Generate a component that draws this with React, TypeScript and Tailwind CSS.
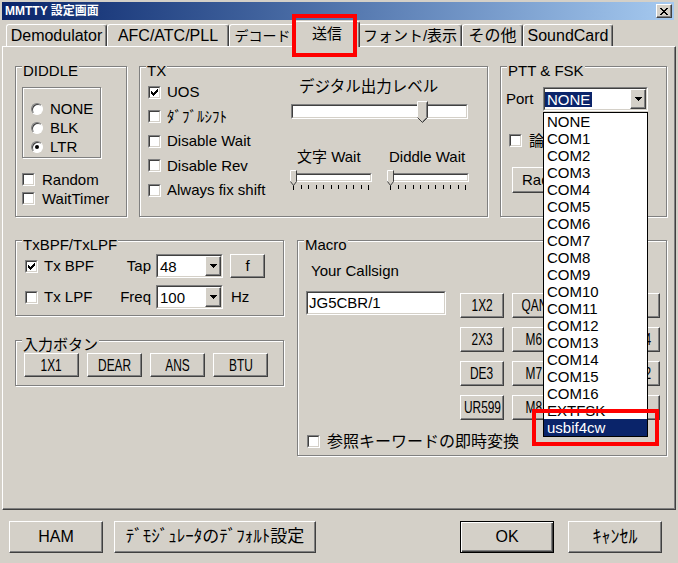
import type { ReactNode } from "react";

const raised =
  "border border-t-white border-l-white border-r-[#404040] border-b-[#404040] bg-[#d4d0c8] shadow-[inset_-1px_-1px_0_#808080]";

const CHECK_ROWS = ["......#", ".....##", "#...###", "##.###.", "#####..", ".###...", "..#...."];

const PORTS = [
  "NONE", "COM1", "COM2", "COM3", "COM4", "COM5", "COM6", "COM7", "COM8", "COM9",
  "COM10", "COM11", "COM12", "COM13", "COM14", "COM15", "COM16", "EXTFSK", "usbif4cw",
];

// third and fourth columns sit under the open list, only their edges show
const MACRO_ROWS = [
  ["1X2", "QAN", "", ""],
  ["2X3", "M6", "", "4"],
  ["DE3", "M7", "", "2"],
  ["UR599", "M8", "", ""],
];

function Sunken({ className = "", innerClassName = "", children }: { className?: string; innerClassName?: string; children?: ReactNode }) {
  return (
    <div className={`border border-t-[#808080] border-l-[#808080] border-r-white border-b-white ${className}`}>
      <div className={`h-full w-full border border-t-[#404040] border-l-[#404040] border-r-[#d4d0c8] border-b-[#d4d0c8] ${innerClassName}`}>
        {children}
      </div>
    </div>
  );
}

function Check({ checked = false }: { checked?: boolean }) {
  return (
    <Sunken className="h-[13px] w-[13px] shrink-0" innerClassName="flex items-center justify-center bg-white">
      {checked && (
        <svg width="7" height="7" viewBox="0 0 7 7" shapeRendering="crispEdges">
          {CHECK_ROWS.flatMap((row, y) =>
            row.split("").map((c, x) => (c === "#" ? <rect key={`${x}-${y}`} x={x} y={y} width="1" height="1" fill="#000" /> : null))
          )}
        </svg>
      )}
    </Sunken>
  );
}

function Radio({ checked = false }: { checked?: boolean }) {
  return (
    <span className="flex h-[12px] w-[12px] shrink-0 items-center justify-center rounded-full border border-t-[#808080] border-l-[#808080] border-r-white border-b-white bg-white shadow-[inset_1px_1px_0_#404040]">
      {checked && <span className="h-[4px] w-[4px] rounded-full bg-black" />}
    </span>
  );
}

function Arrow() {
  return (
    <svg width="7" height="4" viewBox="0 0 7 4" shapeRendering="crispEdges">
      <path d="M0 0h7v1h-1v1h-1v1h-1v1h-1v-1h-1v-1h-1v-1h-1z" fill="#000" />
    </svg>
  );
}

function Combo({ value, className = "", selected = false }: { value: string; className?: string; selected?: boolean }) {
  return (
    <Sunken className={`h-[24px] shrink-0 ${className}`} innerClassName="flex bg-white">
      <div className="flex flex-1 items-center overflow-hidden">
        <span className={selected ? "bg-[#0a246a] px-[2px] leading-[15px] text-white" : "px-[2px] leading-[15px]"}>{value}</span>
      </div>
      <div className={`${raised} flex w-[16px] items-center justify-center`}>
        <Arrow />
      </div>
    </Sunken>
  );
}

function Btn({ className = "", children }: { className?: string; children?: ReactNode }) {
  return <div className={`${raised} flex shrink-0 items-center justify-center overflow-visible whitespace-nowrap ${className}`}>{children}</div>;
}

function Narrow({ children }: { children: ReactNode }) {
  return <span className="inline-block scale-x-[0.7] whitespace-nowrap text-[17px] leading-[17px]">{children}</span>;
}

function Group({ title, className = "", children }: { title: string; className?: string; children?: ReactNode }) {
  return (
    <div className={`relative shrink-0 border border-[#808080] shadow-[1px_1px_0_#fff,inset_1px_1px_0_#fff] ${className}`}>
      <span className="absolute -top-[4px] left-[6px] whitespace-nowrap bg-[#d4d0c8] px-[1px] leading-[15px]">{title}</span>
      {children}
    </div>
  );
}

function BigThumb() {
  return (
    <svg width="11" height="22" viewBox="0 0 11 22" className="absolute -top-[3px] left-[126px]">
      <polygon points="0.5,16.5 0.5,0.5 10.5,0.5 10.5,16.5 5.5,21.5" fill="#d4d0c8" />
      <polyline points="0.5,16.5 0.5,0.5 10.5,0.5" fill="none" stroke="#fff" />
      <polyline points="9.5,1.5 9.5,16.5 5.5,20.5" fill="none" stroke="#808080" />
      <polyline points="10.5,0.5 10.5,16.5 5.5,21.5 0.5,16.5" fill="none" stroke="#404040" />
    </svg>
  );
}

function SmallSlider() {
  return (
    <div className="w-[82px]">
      <div className="relative">
        <Sunken className="h-[9px] w-[82px]" innerClassName="bg-white" />
        <svg width="7" height="16" viewBox="0 0 7 16" className="absolute -top-[3px] left-0">
          <polygon points="0.5,11.5 0.5,0.5 6.5,0.5 6.5,11.5 3.5,15.5" fill="#d4d0c8" />
          <polyline points="0.5,11.5 0.5,0.5 6.5,0.5" fill="none" stroke="#fff" />
          <polyline points="6.5,0.5 6.5,11.5 3.5,15.5 0.5,11.5" fill="none" stroke="#404040" />
        </svg>
      </div>
      <div className="ml-[3px] mt-[3px] flex w-[76px] justify-between">
        {Array.from({ length: 11 }).map((_, i) => (
          <span key={i} className={i === 0 || i === 10 ? "h-[5px] w-px bg-black" : "h-[4px] w-px bg-black"} />
        ))}
      </div>
    </div>
  );
}

function Tab({ label, className = "", active = false }: { label: string; className?: string; active?: boolean }) {
  return (
    <div
      className={`flex shrink-0 items-center justify-center whitespace-nowrap rounded-t-[3px] border-t border-l border-r border-t-white border-l-white border-r-[#404040] bg-[#d4d0c8] shadow-[inset_-1px_0_0_#808080] ${
        active ? "relative z-10 -mx-[2px] -mb-[1px] h-[26px] pb-[2px]" : "h-[22px]"
      } ${className}`}
    >
      {label}
    </div>
  );
}

export default function App() {
  return (
    <div className="relative flex h-[563px] w-[678px] flex-col overflow-hidden bg-[#d4d0c8] pl-[2px] pt-[2px] font-['Liberation_Sans','Noto_Sans_CJK_JP',sans-serif] text-[15px] leading-[16px] text-black">
      {/* title bar */}
      <div className="flex h-[18px] w-[672px] shrink-0 items-center justify-between bg-linear-to-r from-[#0a246a] to-[#a6caf0] pl-[3px] pr-[2px]">
        <span className="text-[12px] font-bold leading-[14px] text-white">MMTTY 設定画面</span>
        <div className={`${raised} flex h-[14px] w-[16px] items-center justify-center`}>
          <svg width="8" height="7" viewBox="0 0 8 7" shapeRendering="crispEdges">
            <path d="M0 0h2v1h1v1h2v-1h1v-1h2v1h-1v1h-1v1h-1v1h1v1h1v1h1v1h-2v-1h-1v-1h-2v1h-1v1h-2v-1h1v-1h1v-1h1v-1h-1v-1h-1v-1h-1z" fill="#000" />
          </svg>
        </div>
      </div>

      {/* tabs */}
      <div className="flex h-[26px] shrink-0 items-end pl-[4px] text-[15px]">
        <Tab label="Demodulator" className="w-[101px] text-[16px]" />
        <Tab label="AFC/ATC/PLL" className="w-[122px] text-[16px]" />
        <Tab label="デコード" className="w-[67px] text-[14px]" />
        <Tab label="送信" className="w-[66px]" active />
        <Tab label="フォント/表示" className="w-[104px]" />
        <Tab label="その他" className="w-[61px] text-[16px]" />
        <Tab label="SoundCard" className="w-[90px] text-[16px]" />
      </div>

      {/* tab panel */}
      <div className="h-[464px] w-[674px] shrink-0 border border-t-white border-l-white border-r-[#404040] border-b-[#404040] pl-[12px] pt-[19px] shadow-[inset_-1px_-1px_0_#808080]">
        <div className="flex h-[151px] gap-[12px]">
          <Group title="DIDDLE" className="h-[151px] w-[112px]">
            <div className="pl-[6px] pt-[20px]">
              <div className="h-[71px] w-[79px] border border-[#808080] pl-[8px] pt-[11px] shadow-[1px_1px_0_#fff,inset_1px_1px_0_#fff]">
                {["NONE", "BLK", "LTR"].map((l) => (
                  <div key={l} className="flex h-[19px] items-center gap-[7px]">
                    <Radio checked={l === "LTR"} />
                    <span>{l}</span>
                  </div>
                ))}
              </div>
              <div className="mt-[12px] flex h-[19px] items-center gap-[7px]">
                <Check />
                <span>Random</span>
              </div>
              <div className="flex h-[19px] items-center gap-[7px]">
                <Check />
                <span>WaitTimer</span>
              </div>
            </div>
          </Group>

          <Group title="TX" className="flex h-[151px] w-[349px]">
            <div className="w-[150px] shrink-0 pl-[8px] pt-[13px]">
              {["UOS", "ﾀﾞﾌﾞﾙｼﾌﾄ", "Disable Wait", "Disable Rev", "Always fix shift"].map((l, i) => (
                <div key={l} className="flex h-[24.5px] items-center gap-[6px] whitespace-nowrap">
                  <Check checked={i === 0} />
                  <span>{l}</span>
                </div>
              ))}
            </div>
            <div className="flex flex-col pt-[12px]">
              <span className="ml-[9px] whitespace-nowrap text-[15.5px] leading-[16px]">デジタル出力レベル</span>
              <div className="relative ml-[1px] mt-[9px] w-[177px]">
                <Sunken className="h-[15px] w-[177px]" innerClassName="bg-white" />
                <BigThumb />
              </div>
              <div className="mt-[30px] flex whitespace-nowrap leading-[16px]">
                <span className="ml-[7px] w-[92px]">文字 Wait</span>
                <span>Diddle Wait</span>
              </div>
              <div className="mt-[8px] flex gap-[15px]">
                <SmallSlider />
                <SmallSlider />
              </div>
            </div>
          </Group>

          <Group title="PTT & FSK" className="h-[151px] w-[167px]">
            <div className="flex flex-col pl-[5px] pt-[20px]">
              <div className="flex h-[24px] items-center">
                <span className="w-[37px]">Port</span>
                <Combo value="NONE" className="w-[105px]" selected />
              </div>
              <div className="ml-[3px] mt-[20px] flex h-[19px] items-center gap-[7px]">
                <Check />
                <span className="whitespace-nowrap">論</span>
              </div>
              <Btn className="ml-[6px] mt-[17px] h-[26px] w-[120px] justify-start pl-[9px]">Rad</Btn>
            </div>
          </Group>
        </div>

        <div className="mt-[23px] flex gap-[13px]">
          <div className="flex w-[269px] flex-col gap-[24px]">
            <Group title="TxBPF/TxLPF" className="h-[76px] w-[269px]">
              <div className="flex flex-col pl-[9px] pt-[13px]">
                <div className="flex h-[24px] items-center whitespace-nowrap">
                  <Check checked />
                  <span className="ml-[6px] w-[69px]">Tx BPF</span>
                  <span className="w-[43px] pr-[5px] text-right">Tap</span>
                  <Combo value="48" className="w-[67px]" />
                  <Btn className="ml-[7px] h-[24px] w-[35px]">f</Btn>
                </div>
                <div className="mt-[7px] flex h-[24px] items-center whitespace-nowrap">
                  <Check />
                  <span className="ml-[6px] w-[69px]">Tx LPF</span>
                  <span className="w-[43px] pr-[5px] text-right">Freq</span>
                  <Combo value="100" className="w-[67px]" />
                  <span className="ml-[8px]">Hz</span>
                </div>
              </div>
            </Group>
            <Group title="入力ボタン" className="h-[46px] w-[269px]">
              <div className="flex gap-[8px] pl-[8px] pt-[12px]">
                {["1X1", "DEAR", "ANS", "BTU"].map((l) => (
                  <Btn key={l} className="h-[24px] w-[55px]">
                    <Narrow>{l}</Narrow>
                  </Btn>
                ))}
              </div>
            </Group>
          </div>

          <Group title="Macro" className="h-[216px] w-[370px]">
            <div className="flex flex-col pl-[8px] pt-[22px]">
              <span className="ml-[5px] leading-[16px]">Your Callsign</span>
              <div className="mt-[12px] flex items-start">
                <Sunken className="h-[24px] w-[140px] shrink-0" innerClassName="flex items-center bg-white pl-[1px]">
                  JG5CBR/1
                </Sunken>
                <div className="ml-[14px] mt-[2px] grid grid-cols-[repeat(4,44px)] gap-x-[8px] gap-y-[9px]">
                  {MACRO_ROWS.flatMap((row, r) =>
                    row.map((l, c) => {
                      const cls =
                        c === 3
                          ? "h-[25px] w-[44px] justify-end pr-[7px]"
                          : l === "QAN"
                            ? "h-[25px] w-[44px] justify-start pl-[3px]"
                            : "h-[25px] w-[44px]";
                      return (
                        <Btn key={`${r}-${c}`} className={cls}>
                          <Narrow>{l}</Narrow>
                        </Btn>
                      );
                    })
                  )}
                </div>
              </div>
              <div className="ml-[1px] mt-[12px] flex h-[19px] items-center gap-[7px]">
                <Check />
                <span className="whitespace-nowrap text-[16px]">参照キーワードの即時変換</span>
              </div>
            </div>
          </Group>
        </div>
      </div>

      {/* bottom buttons */}
      <div className="flex pl-[7px] pt-[11px]">
        <Btn className="h-[32px] w-[94px] text-[16px]">HAM</Btn>
        <Btn className="ml-[11px] h-[32px] w-[202px] text-[17px]">ﾃﾞﾓｼﾞｭﾚｰﾀのﾃﾞﾌｫﾙﾄ設定</Btn>
        <div className="ml-[144px] flex h-[32px] w-[94px] items-center justify-center border border-black bg-[#d4d0c8] text-[16px] shadow-[inset_1px_1px_0_#fff,inset_-1px_-1px_0_#404040,inset_-2px_-2px_0_#808080]">
          OK
        </div>
        <Btn className="ml-[14px] h-[32px] w-[94px] text-[18px]">ｷｬﾝｾﾙ</Btn>
      </div>

      {/* open dropdown list of the Port combo */}
      <div className="absolute left-[543px] top-[112px] z-20 w-[105px] border border-black bg-white">
        {PORTS.map((p) => (
          <div key={p} className={p === "usbif4cw" ? "h-[17px] bg-[#0a246a] pl-[3px] leading-[17px] text-white" : "h-[17px] pl-[3px] leading-[17px]"}>
            {p}
          </div>
        ))}
      </div>

      {/* red highlight marks */}
      <div className="absolute left-[292px] top-[14px] z-30 h-[43px] w-[65px] border-4 border-[#ff0000]" />
      <div className="absolute left-[532px] top-[409px] z-30 h-[37px] w-[127px] border-4 border-[#ff0000]" />
    </div>
  );
}
